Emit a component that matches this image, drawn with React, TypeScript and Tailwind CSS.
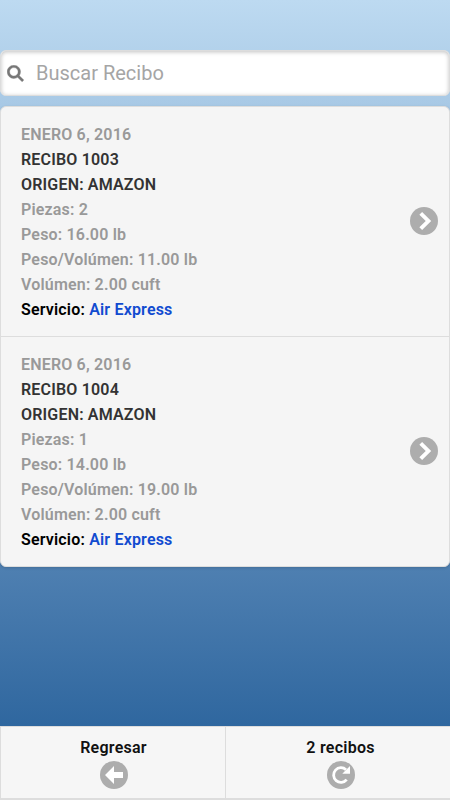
import type { ReactNode } from 'react';
import clsx from 'clsx';

const RECEIPTS = [
  {
    id: 1003,
    date: 'ENERO 6, 2016',
    origin: 'AMAZON',
    pieces: 2,
    weight: '16.00 lb',
    volumeWeight: '11.00 lb',
    volume: '2.00 cuft',
    service: 'Air Express',
  },
  {
    id: 1004,
    date: 'ENERO 6, 2016',
    origin: 'AMAZON',
    pieces: 1,
    weight: '14.00 lb',
    volumeWeight: '19.00 lb',
    volume: '2.00 cuft',
    service: 'Air Express',
  },
];

type Receipt = (typeof RECEIPTS)[number];

function SearchIcon() {
  return (
    <svg viewBox="0 0 14 14" className="size-[17px] shrink-0 fill-[#777] stroke-[#777] stroke-[0.3]">
      <path d="M10.171,8.766c0.617-0.888,0.979-1.964,0.979-3.126c0-3.037-2.463-5.5-5.5-5.5s-5.5,2.463-5.5,5.5s2.463,5.5,5.5,5.5c1.152,0,2.223-0.355,3.104-0.962l3.684,3.683l1.414-1.414L10.171,8.766z M5.649,9.14c-1.933,0-3.5-1.567-3.5-3.5c0-1.933,1.567-3.5,3.5-3.5c1.933,0,3.5,1.567,3.5,3.5C9.149,7.572,7.582,9.14,5.649,9.14z" />
    </svg>
  );
}

function RoundIcon({ className, children }: { className?: string; children: ReactNode }) {
  return (
    <span className={clsx('flex size-7 shrink-0 items-center justify-center rounded-full bg-[#adadad]', className)}>
      <svg viewBox="0 0 14 14" className="size-[18px] overflow-visible fill-white">
        {children}
      </svg>
    </span>
  );
}

function ReceiptRow({ receipt }: { receipt: Receipt }) {
  return (
    <li className="flex items-center justify-between border-t border-[#ddd] pt-[15px] pr-[11px] pb-[14px] pl-5 first:border-t-0">
      <div className="text-base leading-[25px] font-semibold tracking-[0.18px] text-[#999]">
        <p>{receipt.date}</p>
        <p className="text-[#333]">RECIBO {receipt.id}</p>
        <p className="text-[#333]">ORIGEN: {receipt.origin}</p>
        <p>Piezas: {receipt.pieces}</p>
        <p>Peso: {receipt.weight}</p>
        <p>Peso/Volúmen: {receipt.volumeWeight}</p>
        <p>Volúmen: {receipt.volume}</p>
        <p className="text-black">
          Servicio: <span className="text-[#114bd0]">{receipt.service}</span>
        </p>
      </div>
      <RoundIcon className="mb-[2px]">
        <polygon points="3.404,2.051 8.354,7 3.404,11.95 5.525,14.07 12.596,7 5.525,-0.071" />
      </RoundIcon>
    </li>
  );
}

function FooterButton({ label, className, children }: { label: string; className?: string; children: ReactNode }) {
  return (
    <button className={clsx('flex w-[225px] flex-col items-center border-l border-[#ddd] pt-[9px]', className)}>
      <span className="mb-px text-base leading-6 font-semibold tracking-[0.25px] text-[#111]">{label}</span>
      <RoundIcon>{children}</RoundIcon>
    </button>
  );
}

export default function App() {
  return (
    <div className="flex h-[800px] w-[450px] flex-col bg-linear-to-b from-[#bddaf1] to-[#2f679f] to-[726px] font-[Roboto,sans-serif]">
      <label className="mt-[50px] flex h-[46px] items-center rounded-md border border-[#ddd] bg-white pl-[6px] shadow-[inset_0_1px_4px_rgba(0,0,0,0.25)]">
        <SearchIcon />
        <input
          type="text"
          placeholder="Buscar Recibo"
          className="ml-3 flex-1 bg-transparent text-xl text-[#333] outline-none placeholder:text-[#a5a5a5]"
        />
      </label>

      <ul className="mt-[10px] rounded-md border border-[#ddd] bg-[#f5f5f5] shadow-[0_1px_3px_rgba(0,0,0,0.15)]">
        {RECEIPTS.map((receipt) => (
          <ReceiptRow key={receipt.id} receipt={receipt} />
        ))}
      </ul>

      <footer className="mt-auto flex h-[74px] border-t border-b-2 border-[#ddd] bg-[#f6f6f6]">
        <FooterButton label="Regresar" className="pl-px">
          <polygon points="7,4.7 7,0 0,7 7,14 7,9.3 14,9.3 14,4.7" />
        </FooterButton>
        <FooterButton label="2 recibos" className="pl-[5px]">
          <path d="M11.4 10.6A5.7 5.7 0 1 1 10.9 2.9" fill="none" stroke="white" strokeWidth="2.2" />
          <polygon points="14,0 14,6 8,6" />
        </FooterButton>
      </footer>
    </div>
  );
}
